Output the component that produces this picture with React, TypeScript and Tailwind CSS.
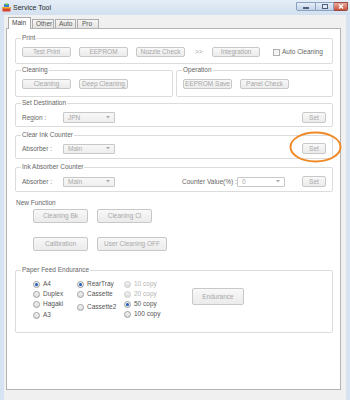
import React from "react";

const btnBase =
  "flex shrink-0 items-center justify-center rounded-[2px] border border-[#c8c8c8] bg-gradient-to-b from-[#f8f8f8] to-[#ebebeb] text-[#a8a8a8]";

function Btn({ className, children }: { className: string; children: React.ReactNode }) {
  return <div className={`${btnBase} ${className}`}>{children}</div>;
}

function Group({ label, className = "", children }: { label: string; className?: string; children: React.ReactNode }) {
  return (
    <fieldset className={`min-w-0 rounded-[2px] border border-[#dcdcdc] ${className}`}>
      <legend className="ml-[5px] px-[1px] leading-[8px] text-[#666]">{label}</legend>
      {children}
    </fieldset>
  );
}

function Select({ className, value }: { className: string; value: string }) {
  return (
    <div
      className={`flex shrink-0 items-center justify-between rounded-[1px] border border-[#c8c8c8] bg-gradient-to-b from-[#f7f7f7] to-[#eeeeee] pl-[4px] pr-[4px] text-[#a8a8a8] ${className}`}
    >
      <span>{value}</span>
      <svg width="4" height="3" viewBox="0 0 4 3">
        <path d="M0 0 L4 0 L2 2.5 Z" fill="#acacac" />
      </svg>
    </div>
  );
}

function Radio({ label, checked = false, dim = false, className = "" }: { label: string; checked?: boolean; dim?: boolean; className?: string }) {
  return (
    <div className={`flex h-[10px] items-center ${className}`}>
      <div
        className={`flex h-[7px] w-[7px] shrink-0 items-center justify-center rounded-full border bg-gradient-to-b from-[#f4f4f4] to-[#dcdcdc] ${
          dim ? "border-[#cccccc]" : "border-[#a0a0a0]"
        }`}
      >
        {checked && <div className="h-[3px] w-[3px] rounded-full bg-[#1d5fc0]" />}
      </div>
      <span className={`ml-[3px] ${dim ? "text-[#b4b4b4]" : "text-[#555]"}`}>{label}</span>
    </div>
  );
}

export default function App() {
  return (
    <div className="relative flex h-[400px] w-[350px] flex-col overflow-hidden bg-[#d7e3f0] font-['Liberation_Sans',Arial,sans-serif] text-[6.5px] leading-[8px] text-[#555]">
      {/* title bar */}
      <div className="flex h-[15px] shrink-0 items-start bg-gradient-to-b from-[#e4edf7] to-[#d2e0ef]">
        <svg className="ml-[2px] mt-[3px]" width="9" height="9" viewBox="0 0 9 9">
          <rect x="0.5" y="4" width="8" height="4.5" fill="#d8432c" />
          <rect x="0.5" y="4" width="8" height="1.5" fill="#f0b52e" />
          <rect x="2" y="1" width="5" height="3" fill="#3c7fd0" />
          <rect x="3" y="0.5" width="3" height="1.5" fill="#6cc04a" />
        </svg>
        <span className="ml-[2px] text-[7px] leading-[15px] text-[#2a2a2a]">Service Tool</span>
        <div className="ml-auto mr-[2px] mt-[2px] flex">
          <div className="flex h-[9px] w-[20px] items-center justify-center rounded-bl-[2px] border border-[#8aa2c0] bg-gradient-to-b from-[#e6eef8] to-[#c2d3e8]">
            <div className="mt-[2px] h-[2px] w-[6px] border border-[#50607a] bg-white" />
          </div>
          <div className="flex h-[9px] w-[18px] items-center justify-center border border-l-0 border-[#8aa2c0] bg-gradient-to-b from-[#e6eef8] to-[#c2d3e8]">
            <div className="h-[5px] w-[6px] border border-[#50607a] bg-[#dfe8f3]" />
          </div>
          <div className="flex h-[9px] w-[14px] items-center justify-center rounded-br-[2px] border border-l-0 border-[#9b4a40] bg-gradient-to-b from-[#e9a99d] to-[#c8503f]">
            <svg width="6" height="5" viewBox="0 0 6 5">
              <path d="M1 0.5 L5 4.5 M5 0.5 L1 4.5" stroke="#fff" strokeWidth="1.4" />
            </svg>
          </div>
        </div>
      </div>

      {/* client area */}
      <div className="mx-[4px] flex flex-1 flex-col bg-[#f0f0f0] pb-[10px] pl-[2px] pr-[5px] pt-[2px]">
        {/* tabs */}
        <div className="flex h-[11px] shrink-0 items-end">
          <div className="relative z-10 -mb-px ml-[2px] h-[12px] w-[23px] border border-b-0 border-[#a9a9a9] bg-white pl-[3px] leading-[10px] text-[#444]">
            Main
          </div>
          <div className="ml-[1px] h-[9px] w-[22px] border border-b-0 border-[#acacac] bg-gradient-to-b from-[#f6f6f6] to-[#e3e3e3] pl-[3px] leading-[8px] text-[#555]">
            Other
          </div>
          <div className="ml-[1px] h-[9px] w-[21px] border border-b-0 border-[#acacac] bg-gradient-to-b from-[#f6f6f6] to-[#e3e3e3] pl-[3px] leading-[8px] text-[#555]">
            Auto
          </div>
          <div className="ml-[1px] h-[9px] w-[22px] border border-b-0 border-[#acacac] bg-gradient-to-b from-[#f6f6f6] to-[#e3e3e3] pl-[4px] leading-[8px] text-[#555]">
            Pro
          </div>
        </div>

        {/* tab page */}
        <div className="flex flex-1 flex-col border border-[#b3b3b3] bg-white pl-[8px] pr-[7px] pt-[5px]">
          <Group label="Print">
            <div className="flex items-center pb-[6px] pl-[6px] pt-[5px]">
              <Btn className="h-[10px] w-[49px]">Test Print</Btn>
              <Btn className="ml-[8px] h-[10px] w-[49px]">EEPROM</Btn>
              <Btn className="ml-[8px] h-[10px] w-[49px]">Nozzle Check</Btn>
              <span className="ml-[10px] w-[17px] text-[#a0a0a0]">&gt;&gt;</span>
              <Btn className="h-[10px] w-[48px]">Integration</Btn>
              <div className="ml-[13px] h-[7px] w-[7px] border border-[#b0b0b0] bg-gradient-to-b from-[#f0f0f0] to-[#fafafa]" />
              <span className="ml-[2px] text-[#666]">Auto Cleaning</span>
            </div>
          </Group>

          <div className="mt-[2px] flex gap-[3px]">
            <Group label="Cleaning" className="w-[158px]">
              <div className="flex items-center pb-[7px] pl-[6px] pt-[5px]">
                <Btn className="h-[10px] w-[49px]">Cleaning</Btn>
                <Btn className="ml-[8px] h-[10px] w-[49px]">Deep Cleaning</Btn>
              </div>
            </Group>
            <Group label="Operation" className="flex-1">
              <div className="flex items-center pb-[7px] pl-[6px] pt-[5px]">
                <Btn className="h-[10px] w-[49px]">EEPROM Save</Btn>
                <Btn className="ml-[8px] h-[10px] w-[49px]">Panel Check</Btn>
              </div>
            </Group>
          </div>

          <Group label="Set Destination" className="mt-[2px]">
            <div className="flex items-center pb-[3px] pl-[6px] pr-[6px] pt-[5px]">
              <span className="w-[41px] text-[#666]">Region :</span>
              <Select className="h-[11px] w-[52px]" value="JPN" />
              <Btn className="ml-auto h-[11px] w-[24px]">Set</Btn>
            </div>
          </Group>

          <Group label="Clear Ink Counter" className="mt-[4px]">
            <div className="flex items-center pb-[4px] pl-[6px] pr-[6px] pt-[4px]">
              <span className="w-[41px] text-[#666]">Absorber :</span>
              <Select className="h-[10px] w-[52px]" value="Main" />
              <Btn className="ml-auto h-[11px] w-[24px]">Set</Btn>
            </div>
          </Group>

          <Group label="Ink Absorber Counter" className="mt-[4px]">
            <div className="flex items-center pb-[4px] pl-[6px] pr-[6px] pt-[5px]">
              <span className="w-[41px] text-[#666]">Absorber :</span>
              <Select className="h-[10px] w-[52px]" value="Main" />
              <span className="ml-[67px] w-[55px] text-[#666]">Counter Value(%) :</span>
              <Select className="h-[10px] w-[48px] from-white to-white" value="0" />
              <Btn className="ml-auto h-[11px] w-[24px]">Set</Btn>
            </div>
          </Group>

          <div className="ml-[1px] mt-[7px] text-[#666]">New Function</div>
          <div className="ml-[18px] mt-[2px] flex">
            <Btn className="h-[14px] w-[55px]">Cleaning Bk</Btn>
            <Btn className="ml-[9px] h-[14px] w-[55px]">Cleaning Cl</Btn>
          </div>
          <div className="ml-[18px] mt-[14px] flex">
            <Btn className="h-[14px] w-[55px]">Calibration</Btn>
            <Btn className="ml-[9px] h-[14px] w-[70px]">User Cleaning OFF</Btn>
          </div>

          <Group label="Paper Feed Endurance" className="mt-[15px]">
            <div className="flex pb-[12px] pl-[17px] pt-[5px]">
              <div className="flex w-[44px] flex-col">
                <Radio label="A4" checked />
                <Radio label="Duplex" />
                <Radio label="Hagaki" />
                <Radio label="A3" className="mt-[1px]" />
              </div>
              <div className="flex w-[47px] flex-col">
                <Radio label="RearTray" checked />
                <Radio label="Cassette" />
                <Radio label="Cassette2" className="mt-[3px]" />
              </div>
              <div className="flex w-[68px] flex-col">
                <Radio label="10 copy" dim />
                <Radio label="20 copy" dim />
                <Radio label="50 copy" checked />
                <Radio label="100 copy" />
              </div>
              <Btn className="mt-[9px] h-[17px] w-[52px]">Endurance</Btn>
            </div>
          </Group>
        </div>
      </div>

      {/* orange highlight around the Set button */}
      <svg className="absolute left-[289px] top-[131px]" width="53" height="32" viewBox="0 0 53 32">
        <ellipse cx="26.5" cy="16" rx="25" ry="14.5" fill="none" stroke="#ef8a26" strokeWidth="2" />
      </svg>
    </div>
  );
}
